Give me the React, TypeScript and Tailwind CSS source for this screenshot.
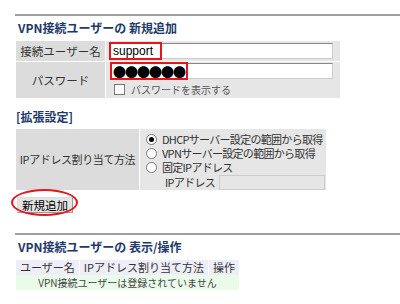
import React from 'react';

const font = { fontFamily: '"Noto Sans CJK JP", "Liberation Sans", sans-serif' };

function Radio({ checked }: { checked?: boolean }) {
  return (
    <span className="mr-[5px] inline-flex h-[11px] w-[11px] shrink-0 items-center justify-center rounded-full border border-[#777] bg-white">
      {checked && <span className="h-[5px] w-[5px] rounded-full bg-black" />}
    </span>
  );
}

export default function App() {
  return (
    <div className="h-[304px] w-[400px] overflow-hidden whitespace-nowrap bg-white text-[11px] leading-[13px] text-[#333]" style={font}>
      <div className="pl-[15px] pt-[14px]">
        {/* 新規追加 ------------------------------------------------ */}
        <div className="border-t-2 border-[#a0a0a0]" />
        <h2 className="ml-[3px] mt-[4px] text-[12px] font-bold leading-[16px] text-[#1e3a6a]">
          VPN接続ユーザーの 新規追加
        </h2>

        <div className="ml-[1px] mt-[5px] grid w-[324px] grid-cols-[89px_1fr] gap-[1px] bg-white">
          <div className="flex h-[20px] items-center justify-center bg-[#dcdcdc] text-[11.5px]">接続ユーザー名</div>
          <div className="relative flex h-[20px] items-center bg-[#e6e6e6] pl-[4px]">
            <div className="flex h-[16px] w-[223px] items-center border border-[#888] border-r-[#ccc] border-b-[#ccc] bg-white pl-[2px] text-[12px] text-black" style={{ fontFamily: '"Liberation Sans", sans-serif' }}>
              support
            </div>
            <div className="absolute left-[3px] top-[1px] h-[18px] w-[53px] border-2 border-[#e8141c]" />
          </div>

          <div className="flex h-[36px] items-center justify-center bg-[#dcdcdc] text-[11.5px]">パスワード</div>
          <div className="relative flex h-[36px] flex-col bg-[#e6e6e6] pl-[4px] pt-[1px]">
            <div className="flex h-[16px] w-[223px] items-center border border-[#888] border-r-[#ccc] border-b-[#ccc] bg-white pl-[2px] text-[13px] leading-none tracking-[-1px] text-black">
              ●●●●●●
            </div>
            <label className="mt-[4px] flex items-center text-[10px] text-[#555]">
              <span className="ml-[4px] mr-[6px] inline-block h-[11px] w-[11px] border border-[#777] bg-white" />
              パスワードを表示する
            </label>
            <div className="absolute left-[4px] top-0 h-[18px] w-[78px] border-2 border-[#e8141c]" />
          </div>
        </div>

        {/* 拡張設定 ------------------------------------------------ */}
        <h3 className="ml-[1px] mt-[11px] text-[12px] font-bold leading-[16px] text-[#1e3a6a]">[拡張設定]</h3>

        <div className="ml-[1px] mt-[4px] grid w-[310px] grid-cols-[123px_1fr] gap-[1px] bg-white">
          <div className="flex items-center justify-center bg-[#dcdcdc] tracking-[-0.4px]">IPアドレス割り当て方法</div>
          <div className="flex flex-col bg-[#e6e6e6] pl-[6px] pt-[3px] leading-[13px] tracking-[-0.7px]">
            <div className="flex h-[14px] items-center">
              <Radio checked />
              DHCPサーバー設定の範囲から取得
            </div>
            <div className="flex h-[14px] items-center">
              <Radio />
              VPNサーバー設定の範囲から取得
            </div>
            <div className="flex h-[14px] items-center">
              <Radio />
              固定IPアドレス
            </div>
            <div className="flex h-[16px] items-center pl-[19px]">
              IPアドレス
              <span className="ml-[4px] h-[15px] w-[106px] border border-[#ccc] bg-[#e6e6e6]" />
            </div>
          </div>
        </div>

        <div className="relative mt-[7px] h-[16px]">
          <button className="ml-[2px] flex h-[16px] w-[56px] items-center justify-center border border-[#999] border-l-[#ddd] border-t-[#ddd] bg-[#e4e4e4] text-[11.5px] leading-[14px] text-black">
            新規追加
          </button>
          <div className="pointer-events-none absolute left-[-4px] top-[-8px] h-[27px] w-[67px] rounded-[50%] border-2 border-[#e8141c]" />
        </div>

        {/* 表示/操作 ------------------------------------------------ */}
        <div className="mt-[20px] border-t-2 border-[#a0a0a0]" />
        <h2 className="ml-[3px] mt-[4px] text-[12px] font-bold leading-[16px] text-[#1e3a6a]">
          VPN接続ユーザーの 表示/操作
        </h2>

        <table className="ml-[1px] mt-[5px] border-separate border-spacing-0 leading-[13px]">
          <thead>
            <tr className="h-[15px]">
              <th className="border-r border-white bg-[#eeeef8] px-[4px] font-normal">ユーザー名</th>
              <th className="border-r border-white bg-[#eeeef8] px-[4px] font-normal">IPアドレス割り当て方法</th>
              <th className="bg-[#eeeef8] px-[4px] font-normal">操作</th>
            </tr>
          </thead>
          <tbody>
            <tr className="h-[15px]">
              <td colSpan={3} className="bg-[#eafbea] text-center text-[10px] text-[#444]">
                VPN接続ユーザーは登録されていません
              </td>
            </tr>
          </tbody>
        </table>
      </div>
    </div>
  );
}
